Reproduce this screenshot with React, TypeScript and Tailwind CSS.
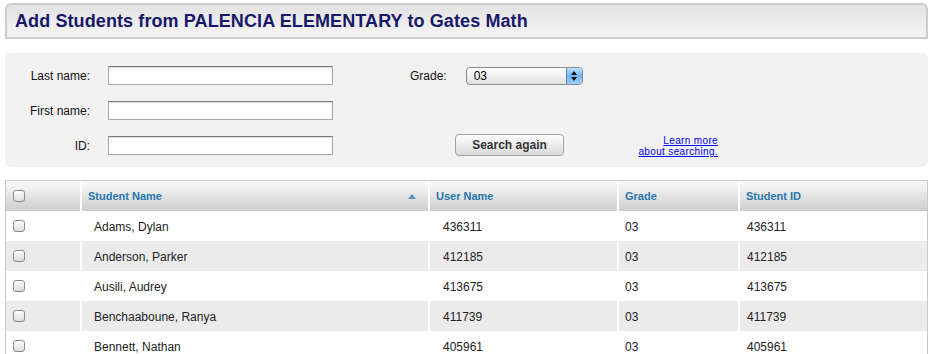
const students = [
  {name: "Adams, Dylan", user: "436311", grade: "03", id: "436311"},
  {name: "Anderson, Parker", user: "412185", grade: "03", id: "412185"},
  {name: "Ausili, Audrey", user: "413675", grade: "03", id: "413675"},
  {name: "Benchaaboune, Ranya", user: "411739", grade: "03", id: "411739"},
  {name: "Bennett, Nathan", user: "405961", grade: "03", id: "405961"},
]

function Check() {
  return (
    <span className="block w-[12px] h-[12px] rounded-[3px] border border-[#8a8a8a] bg-gradient-to-b from-white to-[#dcdcdc] shadow-[inset_0_1px_0_#fff]"/>
  )
}

function Field({label}: {label: string}) {
  return (
    <div className="flex items-center">
      <span className="w-[85px] text-right text-[12px] text-[#111]">{label}</span>
      <span className="ml-[18px] block w-[225px] h-[19px] bg-white border border-[#a8a8a8] border-t-[#7c7c7c] shadow-[inset_0_1px_1px_rgba(0,0,0,0.15)]"/>
    </div>
  )
}

function App() {
  const cols = "grid grid-cols-[74px_346px_187px_119px_1fr] gap-x-[2px]"

  return (
    <div className="w-[930px] h-[354px] overflow-hidden bg-white font-['Liberation_Sans',Arial,sans-serif]">
      <div className="mt-[3px] ml-[5px] mr-[2px] h-[36px] rounded-t-[6px] border-2 border-[#cdcdcd] bg-gradient-to-b from-[#e3e3e3] to-[#f4f4f4] flex items-center pl-[8px]">
        <h1 className="text-[18px] font-bold text-[#17186a] leading-none tracking-[0.1px]">Add Students from PALENCIA ELEMENTARY to Gates Math</h1>
      </div>

      <div className="mt-[14px] ml-[5px] mr-[2px] h-[114px] rounded-[6px] bg-[#f2f2f2] pt-[13px]">
        <div className="flex items-center h-[19px]">
          <Field label="Last name:"/>
          <span className="ml-[77px] text-[12px] text-[#111]">Grade:</span>
          <div className="ml-[19px] flex w-[117px] h-[18px] rounded-[4px] border border-[#8c8c8c] bg-gradient-to-b from-white via-[#f0f0f0] to-[#dedede] overflow-hidden">
            <span className="flex-1 pl-[7px] text-[12px] leading-[16px] text-black">03</span>
            <span className="w-[16px] flex flex-col items-center justify-center gap-[2px] bg-gradient-to-b from-[#bfe0fb] via-[#6fb5f1] to-[#9dd0fa] border-l border-[#5a7fae]">
              <svg width="6" height="4" viewBox="0 0 6 4"><path d="M3 0L6 4H0z" fill="#111"/></svg>
              <svg width="6" height="4" viewBox="0 0 6 4"><path d="M0 0H6L3 4z" fill="#111"/></svg>
            </span>
          </div>
        </div>
        <div className="mt-[16px] flex items-center h-[19px]">
          <Field label="First name:"/>
        </div>
        <div className="mt-[16px] flex items-center h-[19px]">
          <Field label="ID:"/>
          <button className="ml-[122px] -mt-[1px] w-[109px] h-[22px] rounded-[4px] border border-[#a3a3a3] bg-gradient-to-b from-[#fdfdfd] via-[#ececec] to-[#dadada] text-[12px] font-bold text-[#333]">Search again</button>
          <a href="#" className="ml-[70px] mt-[1px] w-[84px] text-right text-[10px] leading-[11px] tracking-[0.35px] text-[#0000ee] underline">Learn more<br/>about searching.</a>
        </div>
      </div>

      <div className="mt-[13px] ml-[5px] mr-[2px] border-l border-r border-t border-[#c9c9c9]">
        <div className={`${cols} h-[30px] bg-white`}>
          <div className="flex items-center pl-[7px] bg-gradient-to-b from-[#fbfbfb] to-[#cdcdcd]"><Check/></div>
          <div className="flex items-center justify-between pl-[6px] pr-[12px] bg-gradient-to-b from-[#fbfbfb] to-[#cdcdcd] text-[11px] font-bold text-[#2877ae]">
            <span>Student Name</span>
            <svg width="8" height="5" viewBox="0 0 8 5"><path d="M4 0L8 5H0z" fill="#5b8fc4"/></svg>
          </div>
          <div className="flex items-center pl-[6px] bg-gradient-to-b from-[#fbfbfb] to-[#cdcdcd] text-[11px] font-bold text-[#2877ae]">User Name</div>
          <div className="flex items-center pl-[6px] bg-gradient-to-b from-[#fbfbfb] to-[#cdcdcd] text-[11px] font-bold text-[#2877ae]">Grade</div>
          <div className="flex items-center pl-[6px] bg-gradient-to-b from-[#fbfbfb] to-[#cdcdcd] text-[11px] font-bold text-[#2877ae]">Student ID</div>
        </div>
        {students.map((s, i) => {
          const bg = i % 2 === 1 ? "bg-[#ebebeb]" : "bg-white"
          return (
            <div key={s.id} className={`${cols} h-[30px] bg-white text-[12px] text-[#222]`}>
              <div className={`flex items-center pl-[7px] ${bg}`}><Check/></div>
              <div className={`flex items-center pl-[12px] pt-[1px] ${bg}`}>{s.name}</div>
              <div className={`flex items-center pl-[13px] pt-[1px] ${bg}`}>{s.user}</div>
              <div className={`flex items-center pl-[6px] pt-[1px] ${bg}`}>{s.grade}</div>
              <div className={`flex items-center pl-[7px] pt-[1px] ${bg}`}>{s.id}</div>
            </div>
          )
        })}
      </div>
    </div>
  )
}

export default App
